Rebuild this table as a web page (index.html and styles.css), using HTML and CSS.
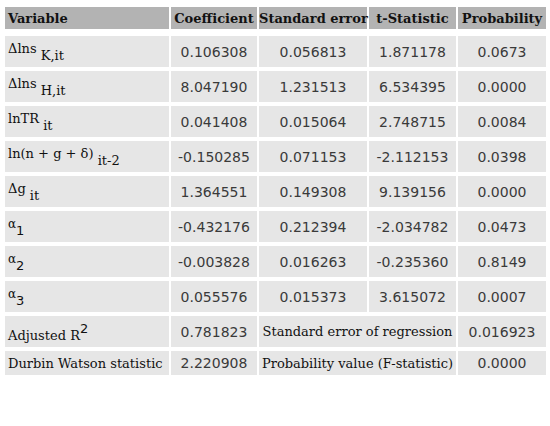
FILE: index.html
```html
<!DOCTYPE html>
<html lang="en">
<head>
  <meta charset="UTF-8" />
  <title>Regression Results</title>
  <link rel="stylesheet" href="styles.css">
</head>
<body>

  <table class="results">
    <colgroup>
      <col class="col-var">
      <col class="col-coef">
      <col class="col-se">
      <col class="col-t">
      <col class="col-p">
    </colgroup>
    <thead>
      <tr>
        <th class="var">Variable</th>
        <th>Coefficient</th>
        <th>Standard error</th>
        <th>t-Statistic</th>
        <th>Probability</th>
      </tr>
    </thead>
    <tbody>
      <tr>
        <td class="label">&Delta;lns <sub>K,it</sub></td>
        <td>0.106308</td>
        <td>0.056813</td>
        <td>1.871178</td>
        <td>0.0673</td>
      </tr>
      <tr>
        <td class="label">&Delta;lns <sub>H,it</sub></td>
        <td>8.047190</td>
        <td>1.231513</td>
        <td>6.534395</td>
        <td>0.0000</td>
      </tr>
      <tr>
        <td class="label">lnTR <sub>it</sub></td>
        <td>0.041408</td>
        <td>0.015064</td>
        <td>2.748715</td>
        <td>0.0084</td>
      </tr>
      <tr>
        <td class="label">ln(n + g + &delta;) <sub>it-2</sub></td>
        <td>-0.150285</td>
        <td>0.071153</td>
        <td>-2.112153</td>
        <td>0.0398</td>
      </tr>
      <tr>
        <td class="label">&Delta;g <sub>it</sub></td>
        <td>1.364551</td>
        <td>0.149308</td>
        <td>9.139156</td>
        <td>0.0000</td>
      </tr>
      <tr>
        <td class="label"><span class="alpha">&alpha;</span><sub class="num">1</sub></td>
        <td>-0.432176</td>
        <td>0.212394</td>
        <td>-2.034782</td>
        <td>0.0473</td>
      </tr>
      <tr>
        <td class="label"><span class="alpha">&alpha;</span><sub class="num">2</sub></td>
        <td>-0.003828</td>
        <td>0.016263</td>
        <td>-0.235360</td>
        <td>0.8149</td>
      </tr>
      <tr>
        <td class="label"><span class="alpha">&alpha;</span><sub class="num">3</sub></td>
        <td>0.055576</td>
        <td>0.015373</td>
        <td>3.615072</td>
        <td>0.0007</td>
      </tr>
      <tr>
        <td class="label">Adjusted R<sup>2</sup></td>
        <td>0.781823</td>
        <td class="label-center" colspan="2">Standard error of regression</td>
        <td>0.016923</td>
      </tr>
      <tr class="short">
        <td class="label">Durbin Watson statistic</td>
        <td>2.220908</td>
        <td class="label-center" colspan="2">Probability value (F-statistic)</td>
        <td>0.0000</td>
      </tr>
    </tbody>
  </table>

</body>
</html>
```

FILE: styles.css
```css
body {
  margin: 0;
  background: #ffffff;
}

.results {
  border-collapse: separate;
  border-spacing: 2px 4px;
  margin: 3px 0 0 3px;
  table-layout: fixed;
  width: 545px;
}

.col-var { width: 164px; }
.col-coef { width: 86px; }
.col-se { width: 108px; }
.col-t { width: 87px; }
.col-p { width: 88px; }

thead tr {
  height: 25px;
}

th {
  background-color: #b3b3b3;
  background-clip: padding-box;
  border-bottom: 3px solid #ffffff;
  padding: 0;
  font: bold 13px "DejaVu Serif", serif;
  color: #111;
  text-align: center;
  white-space: nowrap;
}

th.var {
  text-align: left;
  padding-left: 3px;
}

tbody tr {
  height: 31px;
}

tbody tr.short {
  height: 24px;
}

td {
  background-color: #e6e6e6;
  padding: 0;
  font: 14px "DejaVu Sans", sans-serif;
  color: #3a3a3a;
  text-align: center;
  vertical-align: middle;
  white-space: nowrap;
}

td.label {
  text-align: left;
  padding-left: 3px;
  font: 13px "DejaVu Serif", serif;
  color: #111;
}

td.label-center {
  font: 13px "DejaVu Serif", serif;
  color: #111;
}

.alpha {
  font-size: 12px;
}

sub {
  font-size: 13px;
  vertical-align: -7px;
}

sub.num {
  font-family: "DejaVu Sans", sans-serif;
}

sup {
  font-family: "DejaVu Sans", sans-serif;
  font-size: 13px;
  vertical-align: 7px;
}
```
